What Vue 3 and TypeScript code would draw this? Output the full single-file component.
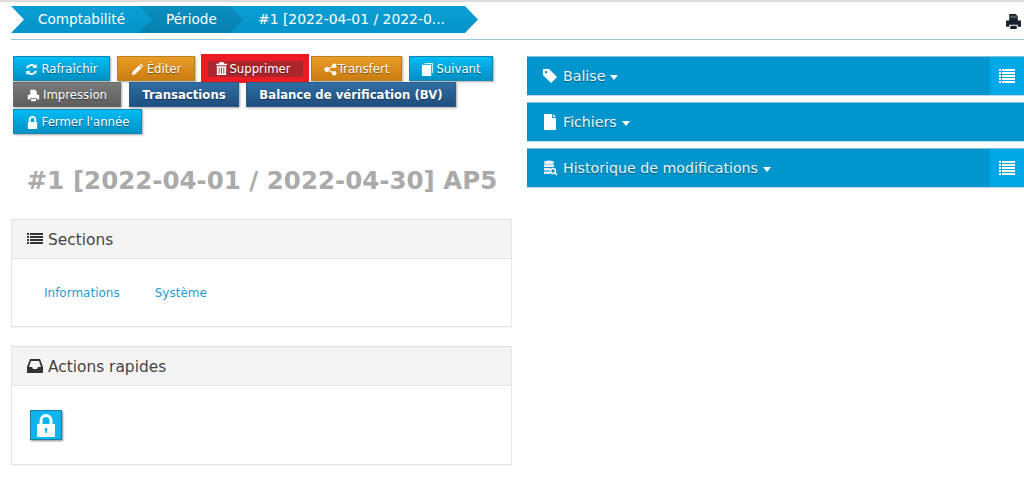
<script setup lang="ts">
const crumbs = ['Comptabilité', 'Période', '#1 [2022-04-01 / 2022-0...']
</script>

<template>
  <div class="page">
    <div class="topbar">
      <nav class="crumbs">
        <span v-for="(c, i) in crumbs" :key="c" class="crumb" :class="'c' + i">{{ c }}</span>
      </nav>
      <svg class="printer" viewBox="0 0 16 16" width="17" height="17"><path fill="#16202a" d="M4 1h6l2 2v4H4z M1 7h14v6h-3v-2H4v2H1z M5 12h6v3H5z"/><rect x="5" y="2.500" width="6" height="2.500" fill="#fff" opacity=".25"/></svg>
    </div>
    <div class="columns">
      <div class="left">
        <div class="btns">
          <div class="row r1">
            <button class="btn blue w-ref"><svg class="ic" viewBox="0 0 14 14"><path fill="none" stroke="#fff" stroke-width="2" d="M2.2 5.6A5 5 0 0 1 11 4.2M11.8 8.4A5 5 0 0 1 3 9.8"/><path fill="#fff" d="M12.6 1v4.4H8.2zM1.4 13V8.6h4.4z"/></svg>Rafraîchir</button>
            <button class="btn orange w-edit"><svg class="ic" viewBox="0 0 14 14"><path fill="#fff" d="M1 13l.8-3.6 7-7 2.8 2.8-7 7zM9.600 1.600l1-1 2.800 2.800-1 1z"/></svg>Éditer</button>
            <div class="del-wrap"><button class="del"><svg class="ic" viewBox="0 0 14 14"><path fill="#fff" d="M5 0h4l1 2h3v1.500H1V2h3zM2 4.500h10V14H2z"/><path stroke="#a8262c" stroke-width="1" d="M4.500 6v6.500M7 6v6.500M9.500 6v6.500"/></svg>Supprimer</button></div>
            <button class="btn orange w-tr"><svg class="ic" viewBox="0 0 14 14"><circle cx="3" cy="7" r="2.600" fill="#fff"/><circle cx="11" cy="3" r="2.400" fill="#fff"/><circle cx="11" cy="11" r="2.400" fill="#fff"/><path stroke="#fff" stroke-width="1.300" d="M3 7l8-4M3 7l8 4"/></svg>Transfert</button>
            <button class="btn blue w-su"><svg class="ic" viewBox="0 0 14 14"><path fill="#dff3fb" d="M4 0h9v11h-1V1H4z"/><path fill="#fff" d="M1 2h10v12H1z"/></svg>Suivant</button>
          </div>
          <div class="row r2">
            <button class="btn gray w-imp"><svg class="ic" viewBox="0 0 16 16"><path fill="#fff" d="M4 1h6l2 2v4H4zM1 7h14v6h-3v-2H4v2H1zM5 12h6v3H5z"/></svg>Impression</button>
            <button class="btn navy w-tx">Transactions</button>
            <button class="btn navy w-bv">Balance de vérification (BV)</button>
          </div>
          <div class="row r3">
            <button class="btn blue w-fa"><svg class="ic" viewBox="0 0 14 14"><path fill="none" stroke="#fff" stroke-width="2" d="M4 7V4a3 3 0 0 1 6 0v3"/><rect x="2" y="6.500" width="10" height="7.500" rx="1" fill="#fff"/></svg>Fermer l'année</button>
          </div>
        </div>
        <h1 class="title">#1 [2022-04-01 / 2022-04-30] AP5</h1>
        <section class="card">
          <header class="card-h"><svg class="cic" viewBox="0 0 16 16"><path fill="#333" d="M0 2h2v2H0zM3 2h13v2H3zM0 5h2v2H0zM3 5h13v2H3zM0 8h2v2H0zM3 8h13v2H3zM0 11h2v2H0zM3 11h13v2H3z"/></svg>Sections</header>
          <div class="card-b links"><a>Informations</a><a>Système</a></div>
        </section>
        <section class="card second">
          <header class="card-h"><svg class="cic" viewBox="0 0 16 16"><path fill="#333" fill-rule="evenodd" d="M3 1h10l3 8v6H0V9zM4 3L2 9h3l1 2h4l1-2h3l-2-6z"/></svg>Actions rapides</header>
          <div class="card-b quick">
            <button class="lock"><svg viewBox="0 0 18 23" width="18" height="23"><path fill="#fff" fill-rule="evenodd" d="M2.500 10V6.500a6.500 6.500 0 0 1 13 0V10H17a1 1 0 0 1 1 1v11a1 1 0 0 1-1 1H1a1 1 0 0 1-1-1V11a1 1 0 0 1 1-1zM5.500 10h7V6.500a3.500 3.500 0 0 0-7 0zM9 14a1.500 1.500 0 0 0-.8 2.800V19h1.600v-2.200A1.500 1.500 0 0 0 9 14z"/></svg></button>
          </div>
        </section>
      </div>
      <div class="right">
        <div class="bar">
          <span class="bar-t"><svg class="bic" viewBox="0 0 16 16"><path fill="#fff" fill-rule="evenodd" d="M1 1h6l8 8-6 6-8-8zM4 3a1.200 1.200 0 1 0 0 2.400A1.200 1.200 0 0 0 4 3z"/></svg>Balise <i class="caret"></i></span>
          <span class="bar-m"><svg viewBox="0 0 16 14" width="16" height="14"><path fill="#fff" d="M0 0h2v2H0zM3 0h13v2H3zM0 3h2v2H0zM3 3h13v2H3zM0 6h2v2H0zM3 6h13v2H3zM0 9h2v2H0zM3 9h13v2H3zM0 12h2v2H0zM3 12h13v2H3z"/></svg></span>
        </div>
        <div class="bar">
          <span class="bar-t"><svg class="bic" viewBox="0 0 16 16"><path fill="#fff" d="M2 0h8v4h4v12H2zM11 0l3 3h-3z"/></svg>Fichiers <i class="caret"></i></span>
        </div>
        <div class="bar">
          <span class="bar-t"><svg class="bic" viewBox="0 0 16 16"><ellipse cx="7" cy="2.500" rx="5" ry="2" fill="#e8eef2"/><path fill="#e8eef2" d="M2 4.500h10V7H2zM2 8h6v2.500H2zM2 11.500h6V14H2z"/><circle cx="11" cy="11" r="2.500" fill="none" stroke="#fff" stroke-width="1.400"/><path stroke="#fff" stroke-width="1.600" d="M13 13l2 2"/></svg>Historique de modifications <i class="caret"></i></span>
          <span class="bar-m"><svg viewBox="0 0 16 14" width="16" height="14"><path fill="#fff" d="M0 0h2v2H0zM3 0h13v2H3zM0 3h2v2H0zM3 3h13v2H3zM0 6h2v2H0zM3 6h13v2H3zM0 9h2v2H0zM3 9h13v2H3zM0 12h2v2H0zM3 12h13v2H3z"/></svg></span>
        </div>
      </div>
    </div>
  </div>
</template>

<style>
html, body { margin: 0; background: #fff; }
</style>

<style scoped>
.page {
  width: 1024px; height: 477px; overflow: hidden; box-sizing: border-box;
  font-family: "DejaVu Sans", Verdana, sans-serif; color: #333;
  border-top: 2px solid #dcdcdc; background: #fff;
}
.topbar {
  margin-left: 11px; height: 38px; box-sizing: border-box; padding-top: 4px;
  border-bottom: 1px solid #a0c6d9; display: flex; justify-content: space-between; align-items: flex-start;
}
.crumbs { display: flex; }
.crumb {
  display: block; height: 27px; line-height: 27px; font-size: 13.6px; color: #fff; white-space: nowrap;
  padding: 0 27px; background: #0599cf;
  clip-path: polygon(0 0, calc(100% - 13px) 0, 100% 50%, calc(100% - 13px) 100%, 0 100%, 13px 50%);
}
.c0 { width: 87px; z-index: 3; position: relative; background: linear-gradient(#0a9fd4, #0593c8); }
.c1 { width: 50px; margin-left: -13px; z-index: 2; position: relative; background: linear-gradient(#0a8fc0, #067fae); clip-path: polygon(0 0, calc(100% - 13px) 0, 100% 50%, calc(100% - 13px) 100%, 0 100%, 0 0); }
.c2 { width: 188px; margin-left: -13px; padding-left: 28px; padding-right: 32px; font-size: 13.9px; background: linear-gradient(#0a9fd4, #0593c8); clip-path: polygon(0 0, calc(100% - 13px) 0, 100% 50%, calc(100% - 13px) 100%, 0 100%, 0 0); }
.printer { margin: 7px 2px 0 0; }
.columns { display: flex; }
.left { width: 501px; margin-left: 11px; }
.right { margin-left: 15px; width: 497px; padding-top: 16px; display: flex; flex-direction: column; gap: 6px; }
.btns { padding: 16px 0 0 2px; height: 81px; }
.row { display: flex; align-items: flex-start; }
.r1 { height: 26px; }
.r2 { height: 27px; margin-top: 0; }
.btn {
  height: 25px; box-sizing: border-box; border: 1px solid; padding: 1px 0 0; margin: 0; display: flex; align-items: center; justify-content: center;
  font: 11.7px "DejaVu Sans", Verdana, sans-serif; color: #fff; text-shadow: 0 1px 1px rgba(0,0,0,.45);
  box-shadow: 1px 1px 2px rgba(0,0,0,.35); cursor: pointer;
}
.blue { background: linear-gradient(#00bcf5, #0090c4); border-color: #1187b0; }
.orange { background: linear-gradient(#eb9c2a, #c97d10); border-color: #b8811f; }
.gray { background: linear-gradient(#7a7a7a, #5e5e5e); border-color: #6a6a6a; }
.navy { background: linear-gradient(#2f6ea3, #1f4e7e); border-color: #2a5c8a; font-weight: bold; }
.ic { width: 13px; height: 13px; margin-right: 3px; flex: none; }
.w-ref { width: 97px; }
.w-edit { width: 78px; margin-left: 7px; }
.w-tr { width: 91px; margin-left: 2px; margin-top: 0; }
.w-tr .ic { margin-right: 1px; }
.w-su { width: 84px; margin-left: 7px; }
.w-su .ic { margin-right: 2px; }
.w-imp { width: 108px; }
.w-tx { width: 110px; margin-left: 8px; }
.w-bv { width: 210px; margin-left: 7px; }
.w-fa { width: 129px; }
.del-wrap {
  width: 108px; height: 29px; margin: -2px 0 0 6px; background: #ed1c24; display: flex; align-items: center; justify-content: center;
}
.del {
  width: 95px; height: 16px; padding: 0 4px 0 0; border: 0; background: #a8262c; color: #fff; display: flex; align-items: center; justify-content: center;
  font: 11.7px "DejaVu Sans", Verdana, sans-serif; text-shadow: 0 1px 1px rgba(0,0,0,.4); white-space: nowrap;
}
.del .ic { margin-right: 1px; }
.title {
  margin: 29px 0 0; height: 30px; text-align: center; font-size: 24.5px; line-height: 30px; font-weight: bold; color: #aaa; white-space: nowrap;
  padding-left: 1px;
}
.card { margin-top: 23px; height: 108px; box-sizing: border-box; border: 1px solid #e6e6e6; border-top: 1px solid #e0e0e0; box-shadow: 0 1px 1px rgba(0,0,0,.04); }
.second { margin-top: 19px; height: 119px; }
.card-h {
  height: 39px; box-sizing: border-box; background: #f4f4f4; border-bottom: 1px solid #e6e6e6; display: flex; align-items: center;
  padding: 2px 0 0 15px; font-size: 15.4px; color: #444;
}
.cic { width: 16px; height: 16px; margin-right: 5px; flex: none; margin-top: -2px; }
.links { padding: 27px 0 0 32px; display: flex; gap: 35px; font-size: 12px; line-height: 14px; color: #1f9bd1; }
.quick { padding: 24px 0 0 18px; }
.lock {
  width: 32px; height: 30px; padding: 0; border: 1px solid #1b7ea6; background: #0db4ee; box-shadow: 1px 1px 2px rgba(0,0,0,.45);
  display: flex; align-items: center; justify-content: center;
}
.bar {
  height: 40px; background: #0095cc; box-sizing: border-box; border-top: 1px solid #7fc1dc; border-bottom: 1px solid #b9d9e6;
  display: flex; justify-content: space-between; align-items: stretch; color: #fff; font-size: 14.2px;
}
.bar-t { display: flex; align-items: center; padding-left: 15px; text-shadow: 0 1px 1px rgba(0,0,0,.4); color: #eaf6fb; }
.bic { width: 16px; height: 16px; margin-right: 5px; flex: none; }
.caret { display: inline-block; width: 0; height: 0; margin-left: 5px; margin-top: 2px; border: 4px solid transparent; border-top: 5px solid #fff; border-bottom: 0; }
.bar-m { width: 34px; background: #00a8e6; display: flex; align-items: center; justify-content: center; }
</style>
